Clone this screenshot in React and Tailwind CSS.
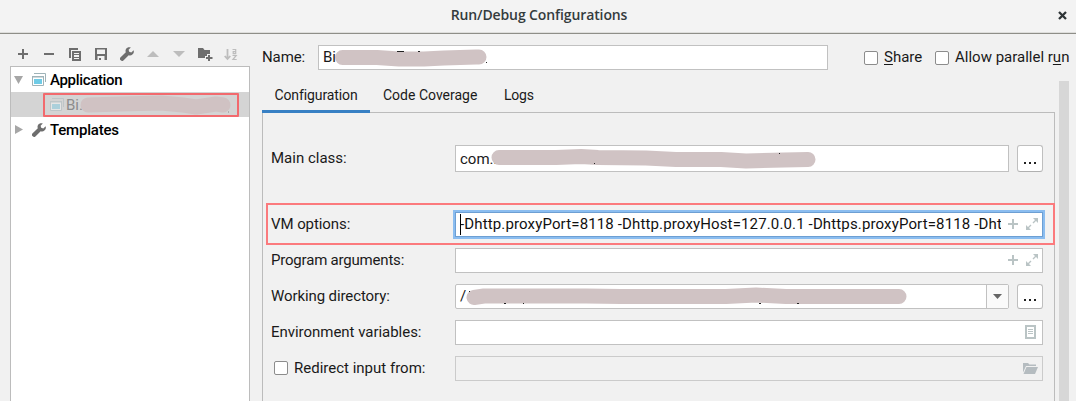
import React from "react";

const Plus = ({ className }) => (
  <svg className={className} width="12" height="12" viewBox="0 0 12 12" fill="none" stroke="currentColor" strokeWidth="2">
    <path d="M6 1v10M1 6h10" />
  </svg>
);

const Expand = () => (
  <svg width="12" height="12" viewBox="0 0 12 12" fill="#bac4c5" stroke="#bac4c5" strokeWidth="1.4">
    <path stroke="none" d="M7 0h5v5L10.300 3.300 8.700 1.700zM0 7v5h5L3.300 10.300 1.700 8.700z" />
    <path fill="none" d="M10.500 1.500 7 5M1.500 10.500 5 7" />
  </svg>
);

const Wrench = ({ className }) => (
  <svg className={className} width="14" height="14" viewBox="0 0 14 14" fill="#6e6e6e">
    <path d="M13.600 3.200 11.300 5.400 9.200 4.800 8.600 2.700 10.800.4C8.900-.2 6.900.4 6 2c-.6 1.100-.6 2.200-.2 3.200L.4 10.600c-.6.600-.6 1.600 0 2.300l.7.700c.7.600 1.700.6 2.300 0l5.300-5.400c1.200.5 2.600.3 3.700-.6 1.400-1.100 1.800-2.900 1.200-4.400z" />
  </svg>
);

const AppIcon = ({ className }) => (
  <svg className={className} width="14" height="13" viewBox="0 0 14 13" fill="none">
    <path d="M2 .500h11.500V9" stroke="#9fb3b8" strokeWidth="1" />
    <path d="M.5 3.500h11v9H.5z" fill="#fff" stroke="#9fb3b8" />
    <path d="M0 3h12v1.500H0z" fill="#9fb3b8" />
    <path d="M2 6h8v5H2z" fill="#6fcbe6" />
  </svg>
);

const Toolbar = () => (
  <div className="flex h-6 items-center pl-[10px] text-[#6e6e6e]">
    <div className="flex w-[26px] justify-center"><Plus /></div>
    <div className="flex w-[26px] justify-center">
      <svg width="12" height="12"><path d="M1 5h10v2H1z" fill="#6e6e6e" /></svg>
    </div>
    <div className="flex w-[26px] justify-center">
      <svg width="12" height="13" viewBox="0 0 12 13" fill="none" stroke="#6e6e6e">
        <path d="M1 10V1h8" strokeWidth="2" />
        <path d="M4 4h7v8H4z" strokeWidth="2" />
        <path d="M5 6.500h5M5 9.500h5" />
      </svg>
    </div>
    <div className="flex w-[26px] justify-center">
      <svg width="12" height="12" viewBox="0 0 12 12" fill="#6e6e6e">
        <path fillRule="evenodd" d="M0 0h12v12H0zM2 1.500v4.500h8V1.500zM2.500 8v4h7V8z" />
        <path d="M4 10h2v2H4z" />
      </svg>
    </div>
    <div className="flex w-[26px] justify-center"><Wrench /></div>
    <div className="flex w-[26px] justify-center">
      <svg width="12" height="6"><path d="M0 6 6 0l6 6z" fill="#bdbdbd" /></svg>
    </div>
    <div className="flex w-[26px] justify-center">
      <svg width="12" height="6"><path d="M0 0h12L6 6z" fill="#bdbdbd" /></svg>
    </div>
    <div className="flex w-[26px] justify-center pl-px">
      <svg width="15" height="14" viewBox="0 0 15 14" fill="#6e6e6e">
        <path d="M0 1h5l1.500 2H12v4H9v2H7v2H0z" />
        <path d="M10 8h2v2h2.500v2H12v2h-2v-2H8v-2h2z" />
      </svg>
    </div>
    <div className="flex w-[26px] justify-center">
      <svg width="14" height="13" viewBox="0 0 14 13" fill="none" stroke="#bdbdbd">
        <path d="M3.500 1v9M.7 8l2.800 3L6.300 8" strokeWidth="1.800" />
        <path d="M8.500 1.500h3.200v4.200H9.200V3.600h2.500M8.500 7.500h3.700L8.900 11.500h3.800" strokeWidth="1.200" />
      </svg>
    </div>
  </div>
);

const Check = ({ className = "" }) => (
  <span className={`h-[14px] w-[14px] shrink-0 rounded-[2px] border border-[#8c8c8c] bg-white ${className}`} />
);

const Dots = () => (
  <div className="ml-2 flex w-[26px] items-end justify-center gap-[3px] rounded-[3px] border border-[#bfbfbf] border-b-[#b0b0b0] bg-white pb-[7px]">
    <i className="h-[2px] w-[2px] bg-[#222]" />
    <i className="h-[2px] w-[2px] bg-[#222]" />
    <i className="h-[2px] w-[2px] bg-[#222]" />
  </div>
);

const Row = ({ label, className, children }) => (
  <div className={`flex ${className}`}>
    <div className="flex w-[184px] shrink-0 items-center"><span className="flex items-center pb-[2px]">{label}</span></div>
    {children}
  </div>
);

const field = "relative flex items-center border border-[#c1c1c1] bg-white pl-1";

export default function App() {
  return (
    <div className="flex h-[401px] w-[1076px] flex-col overflow-hidden bg-[#f1f1f1] font-['Roboto','Liberation_Sans',sans-serif] text-[15px] leading-[18px] text-[#1a1a1a]">
      <header className="flex h-[34px] shrink-0 items-center border-b border-[#8e8e88] bg-[#f3f3f3] pb-[3px] shadow-[inset_0_-1px_0_#dededc]">
        <h1 className="flex-1 pl-[2px] text-center font-['Open_Sans','Noto_Sans',sans-serif] text-[14px] font-semibold tracking-[-0.11px] text-[#343b3d]">Run/Debug Configurations</h1>
        <svg className="mr-[9px] -ml-[18px]" width="9" height="9" viewBox="0 0 9 9">
          <path d="M1 1l7 7M8 1 1 8" stroke="#2e3436" strokeWidth="2.300" />
        </svg>
      </header>

      <div className="flex min-h-0 flex-1">
        <aside className="flex w-[262px] shrink-0 flex-col pt-2">
          <Toolbar />
          <div className="ml-[10px] flex w-[240px] flex-1 flex-col border border-b-0 border-[#bcbcbc] bg-white">
            <div className="flex h-[25px] items-center pl-[3px]">
              <svg width="10" height="8"><path d="M0 0h9L4.500 8z" fill="#a6a6a6" /></svg>
              <AppIcon className="ml-2" />
              <span className="ml-1 text-[15px] font-medium tracking-[-0.33px] text-black">Application</span>
            </div>
            <div className="relative flex h-[25px] items-center bg-[#d4d4d4] pl-[39px]">
              <AppIcon className="opacity-40" />
              <span className="ml-[2px] text-[#8c8c8c]">Bi.</span>
              <svg className="absolute top-0 left-0" width="238" height="25" fill="none">
                <path d="M77 13 110 12 150 11 172 13 185 15 205 12 212 13" stroke="#d0c2c3" strokeWidth="15" strokeLinecap="round" strokeLinejoin="round" />
                <path d="M217 20h1" stroke="#888" />
              </svg>
              <div className="absolute top-[1px] left-[32px] h-[24px] w-[196px] rounded-[1px] border-2 border-[#f26a6e]" />
            </div>
            <div className="flex h-[25px] items-center pl-1">
              <svg width="9" height="9"><path d="M0 0l8 4.500L0 9z" fill="#a6a6a6" /></svg>
              <Wrench className="ml-2" />
              <span className="ml-1 text-[15px] font-medium tracking-[-0.2px] text-black">Templates</span>
            </div>
          </div>
        </aside>

        <main className="flex min-w-0 flex-1 flex-col">
          <div className="mt-[11px] flex h-[25px] shrink-0 items-center">
            <label className="w-14 pb-[2px] tracking-[-0.1px]">Name:</label>
            <div className={`${field} h-[25px] w-[510px]`}>
              <span className="pb-[2px]">Bi</span>
              <svg className="absolute top-0 left-0" width="200" height="23" fill="none">
                <path d="M23.500 11.500H58L80 13h25L125 12l32-1h3" stroke="#d0c3c4" strokeWidth="15" strokeLinecap="round" strokeLinejoin="round" />
                <path d="M78 5.500h7M99 5.500h2M167 16.500h1" stroke="#222" />
              </svg>
            </div>
            <Check className="ml-9" />
            <span className="ml-[6px] w-[51px] pb-[2px]"><u className="underline-offset-2">S</u>hare</span>
            <Check />
            <span className="ml-[6px] pb-[2px] whitespace-nowrap">Allow parallel r<u className="underline-offset-2">u</u>n</span>
          </div>

          <div className="flex min-h-0 flex-1">
            <div className="flex w-[793px] shrink-0 flex-col pt-[11px]">
              <nav className="flex h-[31px] shrink-0 text-[14px]">
                <div className="relative z-10 flex h-[32px] w-[108px] justify-center border-b-[3px] border-[#3880c4] pt-[5px] tracking-[-0.1px]">Configuration</div>
                <div className="w-[121px] pt-[5px] pl-[13px]">Code Coverage</div>
                <div className="pt-[5px] pl-[13px] tracking-[-0.2px]">Logs</div>
              </nav>
              <section className="relative flex flex-1 flex-col border border-b-0 border-[#bcbcbc] pl-2">
                <div className="absolute top-[90px] left-[3px] h-[42px] w-[789px] border-2 border-[#fb7a7d]" />
                <Row label="Main class:" className="mt-[32px] h-[27px]">
                  <div className={`${field} w-[554px]`}>
                    <span>com..</span>
                    <svg className="absolute top-0 left-0" width="400" height="25" fill="none">
                      <path d="M43 11.500H100L125 10.500 142 11.500 190 12 220 13.500H265L290 15 328 14 352 13.500" stroke="#d0c3c4" strokeWidth="15" strokeLinecap="round" strokeLinejoin="round" />
                      <path d="M138 17.500h1M323 7.500h1" stroke="#222" />
                    </svg>
                  </div>
                  <Dots />
                </Row>
                <Row label="VM options:" className="mt-10 h-[25px] tracking-[-0.08px]">
                  <div className="relative flex w-[588px] items-center border border-[#6d9fd3] bg-white pl-1 ring-2 ring-[#8bbdf0]">
                    <span className="w-[541px] overflow-hidden pb-[2px] whitespace-nowrap tracking-[0.14px] text-[#111]">-Dhttp.proxyPort=8118 -Dhttp.proxyHost=127.0.0.1 -Dhttps.proxyPort=8118 -Dht</span>
                    <i className="absolute top-[1px] left-1 h-[21px] w-px bg-black" />
                    <Plus className="mb-px ml-[6px] text-[#bac4c5]" />
                    <span className="mb-px ml-[7px]"><Expand /></span>
                  </div>
                </Row>
                <Row label="Program arguments:" className="mt-[11px] h-[25px] tracking-[-0.2px]">
                  <div className={`${field} w-[588px]`}>
                    <Plus className="mb-px ml-[547px] text-[#bac4c5]" />
                    <span className="mb-px ml-[7px]"><Expand /></span>
                  </div>
                </Row>
                <Row label="Working directory:" className="mt-[11px] h-[25px] tracking-[-0.1px]">
                  <div className="relative flex w-[554px] items-center rounded-[2px] border border-[#c1c1c1] bg-white pl-1">
                    <span className="pb-px">/</span>
                    <svg className="absolute top-0 left-0" width="460" height="23" fill="none">
                      <path d="M18 12.500 28 11H130L165 11.500H270L300 10 330 11.500 443 11.500" stroke="#d0c3c4" strokeWidth="15" strokeLinecap="round" strokeLinejoin="round" />
                      <path d="M13 6.500h1M48 18.500h2M67 18.500h1M303 18.500h2M341 18.500h2" stroke="#222" />
                    </svg>
                    <div className="ml-auto flex h-full w-[22px] items-center justify-center border-l border-[#c1c1c1] bg-[#fafafa]">
                      <svg width="10" height="5"><path d="M0 0h9L4.500 5z" fill="#666" /></svg>
                    </div>
                  </div>
                  <Dots />
                </Row>
                <Row label="Environment variables:" className="mt-[11px] h-[25px] tracking-[-0.03px]">
                  <div className={`${field} w-[588px]`}>
                    <svg className="mr-[6px] mb-px ml-auto" width="11" height="14" viewBox="0 0 11 14" fill="none" stroke="#bac4c5">
                      <path d="M1 1h9v12H1z" strokeWidth="2" />
                      <path d="M3 4.500h5M3 6.500h5M3 8.500h5" />
                    </svg>
                  </div>
                </Row>
                <Row label={<><Check className="ml-[3px]" /><span className="ml-[6px]">Redirect input from:</span></>} className="mt-[11px] h-[25px]">
                  <div className="flex w-[588px] items-center border border-[#cbcbcb]">
                    <svg className="mr-1 ml-auto" width="15" height="11" viewBox="0 0 15 11" fill="#b5bcc0">
                      <path d="M0 0h5l1.500 1.500H13V3H3L0 9.500z" />
                      <path d="M3.500 4H15l-3 7H.5z" />
                    </svg>
                  </div>
                </Row>
              </section>
            </div>
            <div className="mt-[11px] ml-1 w-[10px] bg-[#d7d7d7]" />
          </div>
        </main>
      </div>
    </div>
  );
}
